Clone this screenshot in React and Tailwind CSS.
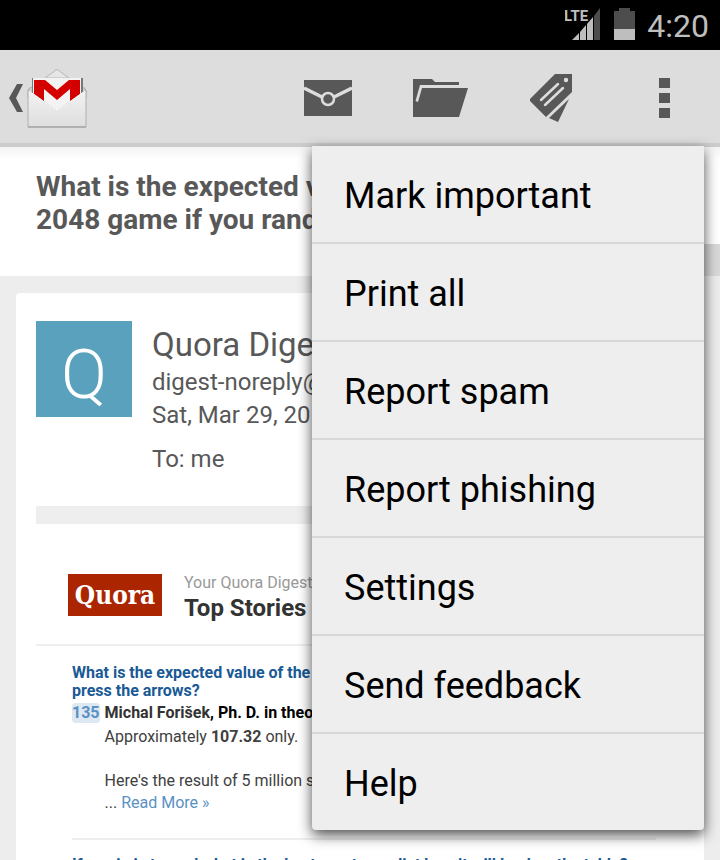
const menu = ["Mark important", "Print all", "Report spam", "Report phishing", "Settings", "Send feedback", "Help"];

function StatusBar() {
  return (
    <div className="flex h-[50px] items-center justify-end bg-black pr-[11px] text-[#bebebe]">
      <svg width="36" height="36" viewBox="0 0 36 36" aria-label="LTE signal">
        <path d="M7 33 L14 26 V33Z M15 25 L21 18 V33 H15Z M22 17 L28 10 V33 H22Z" fill="#bebebe" />
        <path d="M29 9 L35 1 V33 H29Z" fill="#4d4d4d" />
        <text x="-1" y="14" fontSize="15" fontWeight="700" fontFamily="Roboto, sans-serif" fill="#bebebe">LTE</text>
      </svg>
      <svg className="ml-3" width="22" height="36" viewBox="0 0 22 36" aria-label="Battery">
        <path d="M1 4 H6 V1 H17 V4 H22 V23 H1Z" fill="#4d4d4d" />
        <path d="M1 22 H22 V33 H1Z" fill="#bebebe" />
      </svg>
      <span className="ml-3 pt-px text-[32px] leading-[38px]">4:20</span>
    </div>
  );
}

function GmailLogo() {
  return (
    <svg width="60" height="60" viewBox="0 0 60 60" aria-hidden="true">
      <defs>
        <linearGradient id="paper" x1="0" y1="0" x2="0" y2="1">
          <stop offset="0" stopColor="#f2f2f2" />
          <stop offset="1" stopColor="#dedede" />
        </linearGradient>
      </defs>
      <path d="M18 10 L29 2 Q30 1 31 2 L42 10Z" fill="#e6e6e6" stroke="#b8b8b8" />
      <path d="M1 23 Q1 20 5 19 H55 Q59 20 59 23 V30 H1Z" fill="#cccccc" stroke="#aaaaaa" />
      <path d="M5 10 H56 V32 H5Z" fill="#777777" />
      <path d="M6 10 H54 V34 L30 44 L6 34Z" fill="#f3f3f3" />
      <path d="M7 12 H18 L30 22 L42 12 H53 V36 H43 V21 L30 32 L17 21 V36 H7Z" fill="#d40000" />
      <path d="M1 22 L30 43 L59 22 V59 H1Z" fill="url(#paper)" stroke="#b0b0b0" />
      <path d="M2 23 L30 43 L58 23" fill="none" stroke="#ffffff" />
      <path d="M1 59 H59" stroke="#999999" />
    </svg>
  );
}

function ActionBar() {
  return (
    <header className="flex h-[97px] items-center border-b-4 border-[#cccccc] bg-[#dddddd] pt-0.5 pl-2 text-[#585858]">
      <button aria-label="Back to inbox" className="flex items-center gap-px">
        <svg width="18" height="30" viewBox="0 0 18 30">
          <path d="M9 1 H15 L8 15 L15 29 H9 L1 15Z" fill="#585858" />
        </svg>
        <GmailLogo />
      </button>
      <nav className="ml-auto flex items-center">
        <button aria-label="Mark unread" className="flex w-28 justify-center">
          <svg width="48" height="38" viewBox="0 0 48 38">
            <path d="M0 1 H48 V37 H0Z" fill="#585858" />
            <path d="M0 9 L18 18 M48 9 L30 18" stroke="#ddd" strokeWidth="3.5" />
            <circle cx="24" cy="20" r="6" fill="#585858" stroke="#ddd" strokeWidth="2.5" />
          </svg>
        </button>
        <button aria-label="Move to" className="flex w-28 justify-center">
          <svg width="56" height="40" viewBox="0 0 56 40">
            <path d="M1 1 H20 L23 4 H47 V7 H8 L3.5 23 L6 24 L10 10 H56 L47 39 H1Z" fill="#585858" />
          </svg>
        </button>
        <button aria-label="Change labels" className="flex w-28 justify-center">
          <svg width="44" height="50" viewBox="0 0 44 50">
            <path d="M25 1 H42 V19 L16 44 L-1 27Z" fill="#585858" />
            <path d="M39 26 L28 49 L19 45Z" fill="#585858" />
            <circle cx="36" cy="7" r="2.2" fill="#ddd" />
            <path d="M11 27 L28 11 M15 32 L33 15" stroke="#ddd" strokeWidth="2.5" strokeLinecap="round" />
          </svg>
        </button>
        <button aria-label="More options" className="flex w-28 justify-center">
          <svg width="11" height="40" viewBox="0 0 11 40">
            <path d="M0 0 H11 V10 H0Z M0 15 H11 V25 H0Z M0 30 H11 V40 H0Z" fill="#585858" />
          </svg>
        </button>
      </nav>
    </header>
  );
}

function OverflowMenu() {
  return (
    <div role="menu" className="absolute top-[146px] right-4 w-[392px] rounded-b bg-[#eeeeee] shadow-[0_5px_14px_rgba(0,0,0,0.7)]">
      {menu.map((item) => (
        <button key={item} role="menuitem" className="flex h-[98px] w-full items-center border-b-2 border-[#d8d8d8] pt-1 pl-8 text-left text-[36px] leading-[44px] text-black last:h-24 last:border-b-0">
          {item}
        </button>
      ))}
    </div>
  );
}

function Story() {
  return (
    <section className="border-b-2 border-[#eeeeee] pt-[18px] pb-6 text-[16px] leading-[22px] text-[#404040]">
      <a href="#story" className="block font-bold leading-[18px] text-[#195a96]">
        What is the expected value of the 2048 game if you randomly<br />press the arrows?
      </a>
      <div className="flex gap-[5px] pt-[3px]">
        <span className="h-5 rounded-sm bg-[#dde8f2] font-bold leading-[20px] text-[#5a91c4]">135</span>
        <div className="min-w-0">
          <p className="truncate font-bold leading-[20px] text-[#333333]">Michal Forišek<span className="text-black">, Ph. D. in theoretical computer science</span></p>
          <p className="pt-[3px]">Approximately <b>107.32</b> only.</p>
          <p className="truncate pt-[22px]">Here's the result of 5 million simulated games:</p>
          <p>... <a href="#more" className="text-[#5a91c4]">Read More »</a></p>
        </div>
      </div>
    </section>
  );
}

export default function App() {
  return (
    <div className="relative h-screen overflow-hidden bg-[#ededed] font-[Roboto,sans-serif]">
      <StatusBar />
      <ActionBar />
      <div className="flex h-[129px] flex-col bg-gradient-to-b from-[#f4f4f4] to-white to-10% pl-9">
        <h1 className="pt-[23px] text-[28px] font-bold leading-[33px] text-[#585858]">
          What is the expected value of the<br />2048 game if you randomly press
        </h1>
        <div className="mt-auto h-8 w-20 self-end bg-[#d8d8d8]" />
      </div>
      <main className="mx-4 mt-[17px] rounded-t bg-white px-5 pt-7 text-[#585858]">
        <div className="flex h-[185px] gap-5">
          <div className="flex size-24 shrink-0 items-center justify-center bg-[#59a1bd] pt-3 text-[68px] font-light leading-[80px] text-white">Q</div>
          <div className="min-w-0 text-[24px] leading-[33px]">
            <h2 className="pt-[3px] text-[33px] leading-[42px]">Quora Digest</h2>
            <p>digest-noreply@quora.com</p>
            <p>Sat, Mar 29, 2014</p>
            <p className="pt-[11px]">To: me</p>
          </div>
        </div>
        <div className="h-[18px] bg-[#eeeeee]" />
        <div className="flex h-[122px] items-center gap-[22px] border-b-2 border-[#eeeeee] pl-8 pt-[22px]">
          <div className="flex h-[42px] w-[94px] items-center justify-center bg-[#ab2500] font-['DejaVu_Serif_Condensed','DejaVu_Serif',serif] text-[26px] font-bold text-white">Quora</div>
          <div className="pt-[3px]">
            <p className="text-[16px] leading-[22px] text-[#999999]">Your Quora Digest</p>
            <p className="text-[24px] font-bold leading-[28px] text-[#333333]">Top Stories for You</p>
          </div>
        </div>
        <div className="mr-7 ml-9">
          <Story />
          <a href="#next" className="mt-4 block truncate font-bold leading-[18px] text-[#195a96]">If a coin is tossed what is the best way to predict how it will land on the table?</a>
        </div>
      </main>
      <OverflowMenu />
    </div>
  );
}
